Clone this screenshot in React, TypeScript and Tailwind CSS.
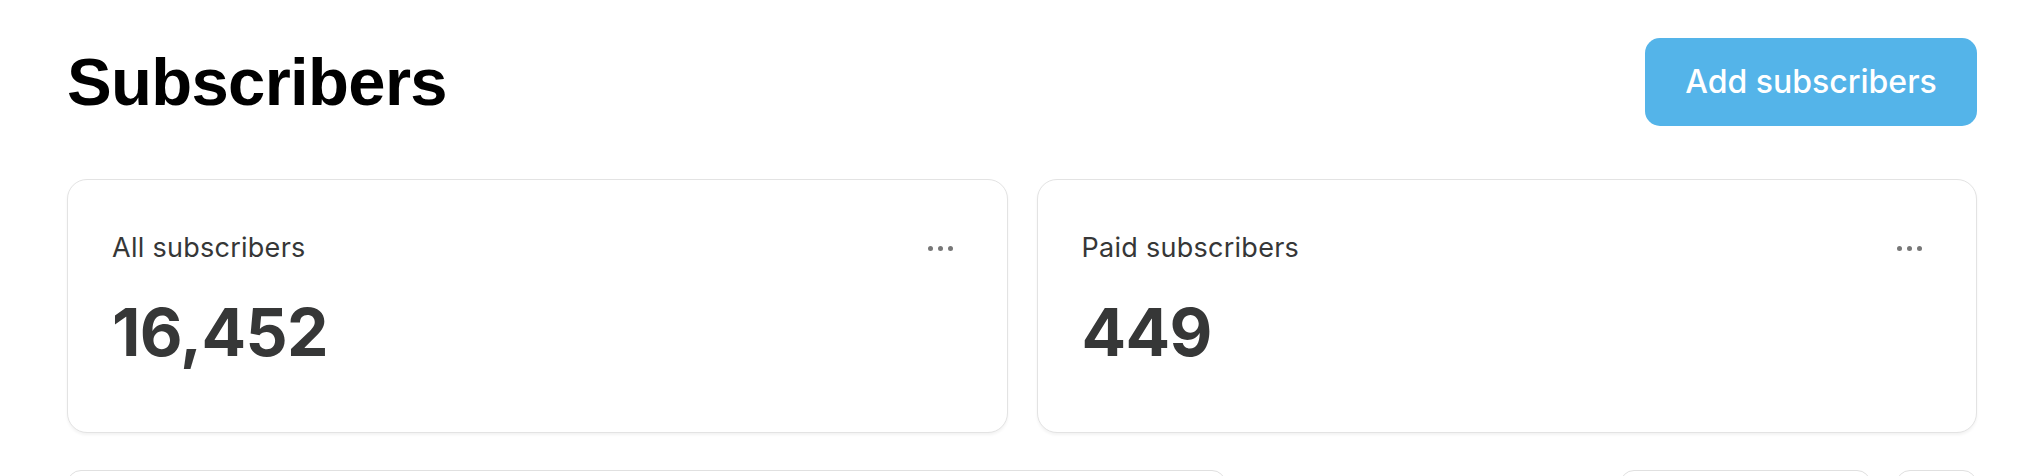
import React from "react";

function Dots() {
  return (
    <div className="flex items-center gap-[5px]">
      <span className="block w-[5px] h-[5px] rounded-full bg-[#777777]" />
      <span className="block w-[5px] h-[5px] rounded-full bg-[#777777]" />
      <span className="block w-[5px] h-[5px] rounded-full bg-[#777777]" />
    </div>
  );
}

function StatCard({ label, value }: { label: string; value: string }) {
  return (
    <div className="h-[254px] rounded-[20px] border border-[#e3e3e3] bg-white shadow-[0_2px_3px_rgba(0,0,0,0.05)] pl-[44px] pr-[54px] pt-[52px]">
      <div className="flex items-center justify-between">
        <div className="text-[27px] leading-[32px] tracking-[0.01em] text-[#363737] font-['Inter',sans-serif]">{label}</div>
        <Dots />
      </div>
      <div className="mt-[32px] text-[66px] leading-[72px] font-bold text-[#363737] font-['Inter',sans-serif] tracking-[-0.01em]">
        {value}
      </div>
    </div>
  );
}

export default function App() {
  return (
    <div className="min-h-screen bg-white pl-[67px] pr-[47px] pt-[38px] font-['Inter',sans-serif]">
      <div className="flex items-center justify-between">
        <h1 className="text-[67px] leading-[72px] font-bold text-black font-['Liberation_Sans',Arial,sans-serif] tracking-[-0.01em]">
          Subscribers
        </h1>
        <button className="h-[88px] w-[332px] rounded-[15px] bg-[#54b4e9] text-white text-[32px] font-medium font-['Inter',sans-serif]">
          Add subscribers
        </button>
      </div>
      <div className="mt-[53px] grid grid-cols-2 gap-[29px]">
        <StatCard label="All subscribers" value="16,452" />
        <StatCard label="Paid subscribers" value="449" />
      </div>
      <div className="mt-[37px] flex items-start">
        <div className="h-[60px] w-[1159px] rounded-[14px] border border-[#e0e0e0] bg-white" />
        <div className="ml-auto h-[60px] w-[251px] rounded-[14px] border border-[#e0e0e0] bg-white" />
        <div className="ml-[25px] h-[60px] w-[81px] rounded-[14px] border border-[#e0e0e0] bg-white" />
      </div>
    </div>
  );
}
